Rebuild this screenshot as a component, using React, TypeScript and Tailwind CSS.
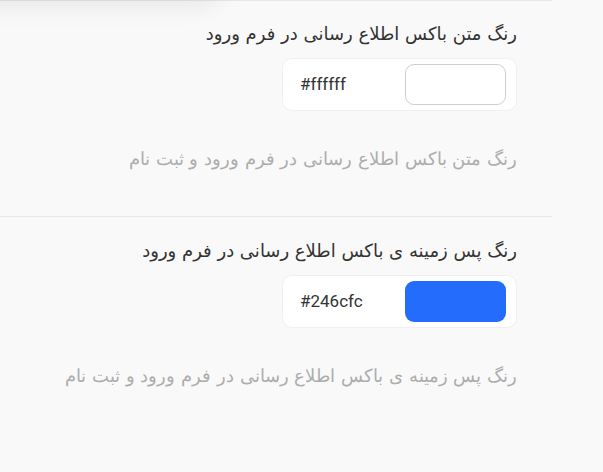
const fa = { fontFamily: '"DejaVu Sans", sans-serif' };

type Field = { label: string; value: string; hint: string; swatch: string };

const fields: Field[] = [
  {
    label: 'رنگ متن باکس اطلاع رسانی در فرم ورود',
    value: '#ffffff',
    hint: 'رنگ متن باکس اطلاع رسانی در فرم ورود و ثبت نام',
    swatch: 'bg-white border border-[#cfcfcf]',
  },
  {
    label: 'رنگ پس زمینه ی باکس اطلاع رسانی در فرم ورود',
    value: '#246cfc',
    hint: 'رنگ پس زمینه ی باکس اطلاع رسانی در فرم ورود و ثبت نام',
    swatch: 'bg-[#246cfc]',
  },
];

function ColorField({ field, first }: { field: Field; first?: boolean }) {
  return (
    <section
      dir="rtl"
      className={`flex flex-col items-start pr-[35px] pb-[46px] ${first ? 'pt-[22px]' : 'pt-[23px] border-t border-[#e6e6e6]'}`}
    >
      <label className="text-[18px] leading-[22px] text-[#333] mb-[13px]" style={fa}>
        {field.label}
      </label>
      <div dir="ltr" className="flex items-center justify-between w-[235px] h-[53px] bg-white rounded-[10px] border border-[#f0f0f0] pl-[17px] pr-[10px]">
        <span className="text-[17px] text-[#333]" style={{ fontFamily: 'Roboto, sans-serif' }}>
          {field.value}
        </span>
        <div className={`w-[101px] h-[41px] rounded-[9px] ${field.swatch}`} />
      </div>
      <p className="mt-[37px] text-[18px] leading-[22px] text-[#adadad] font-light" style={fa}>
        {field.hint}
      </p>
    </section>
  );
}

export default function App() {
  return (
    <div className="relative min-h-[472px] bg-[#f9f9f9] overflow-hidden">
      <div className="absolute -top-[40px] left-[-40px] w-[260px] h-[40px] rounded-full shadow-[0_6px_24px_rgba(0,0,0,0.08)]" />
      <div className="w-[552px] border-t border-[#e6e6e6]">
        {fields.map((f, i) => (
          <ColorField key={f.value} field={f} first={i === 0} />
        ))}
      </div>
    </div>
  );
}
